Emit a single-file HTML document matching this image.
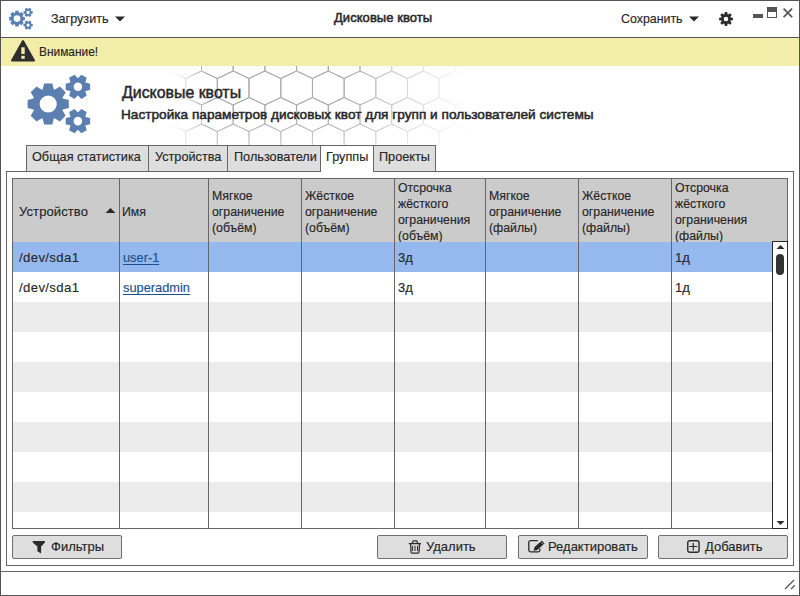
<!DOCTYPE html>
<html><head><meta charset="utf-8">
<style>
*{margin:0;padding:0;box-sizing:border-box}
html,body{width:800px;height:596px;overflow:hidden;background:#fff}
body{position:relative;font-family:"Liberation Sans",sans-serif;font-size:13px;color:#262626;-webkit-text-stroke-width:0.15px}
.a{position:absolute}
.t{position:absolute;white-space:nowrap;line-height:1}
.hl{position:absolute;background:#666;height:1px}
.vl{position:absolute;background:#666;width:1px}
.tab{position:absolute;top:145px;height:27px;background:#dedede;border:1px solid #666;border-right:none}
.tab span{position:absolute;top:5px;white-space:nowrap;line-height:1;font-size:12.7px}
.row{position:absolute;left:13px;width:759px;height:30px}
.cell{position:absolute;white-space:nowrap;line-height:1;top:10px}
.hd{position:absolute;line-height:16px;font-size:12.3px;white-space:nowrap}
.btn{position:absolute;top:535px;height:24px;background:#dedede;border:1px solid #6e6e6e;border-radius:2px}
.btn span{position:absolute;top:4px;white-space:nowrap;line-height:1}
</style></head><body>
<!-- window border -->
<div class="a" style="left:0;top:0;width:800px;height:596px;border:1px solid #555"></div>
<svg width="40" height="37" style="position:absolute;left:0;top:0"><path fill="#5a7fb0" fill-rule="evenodd" d="M22.51 16.50 L24.85 17.05 L24.85 20.15 L22.51 20.70 A5.90 5.90 0 0 1 22.38 21.01 L23.65 23.05 L21.45 25.25 L19.41 23.98 A5.90 5.90 0 0 1 19.10 24.11 L18.55 26.45 L15.45 26.45 L14.90 24.11 A5.90 5.90 0 0 1 14.59 23.98 L12.55 25.25 L10.35 23.05 L11.62 21.01 A5.90 5.90 0 0 1 11.49 20.70 L9.15 20.15 L9.15 17.05 L11.49 16.50 A5.90 5.90 0 0 1 11.62 16.19 L10.35 14.15 L12.55 11.95 L14.59 13.22 A5.90 5.90 0 0 1 14.90 13.09 L15.45 10.75 L18.55 10.75 L19.10 13.09 A5.90 5.90 0 0 1 19.41 13.22 L21.45 11.95 L23.65 14.15 L22.38 16.19 A5.90 5.90 0 0 1 22.51 16.50 Z M20.30 18.60 A3.30 3.30 0 1 0 13.70 18.60 A3.30 3.30 0 1 0 20.30 18.60 Z M31.04 10.90 L32.76 11.25 L32.76 13.55 L31.04 13.90 A3.30 3.30 0 0 1 30.87 14.20 L31.43 15.86 L29.43 17.01 L28.27 15.70 A3.30 3.30 0 0 1 27.93 15.70 L26.77 17.01 L24.77 15.86 L25.33 14.20 A3.30 3.30 0 0 1 25.16 13.90 L23.44 13.55 L23.44 11.25 L25.16 10.90 A3.30 3.30 0 0 1 25.33 10.60 L24.77 8.94 L26.77 7.79 L27.93 9.10 A3.30 3.30 0 0 1 28.27 9.10 L29.43 7.79 L31.43 8.94 L30.87 10.60 A3.30 3.30 0 0 1 31.04 10.90 Z M29.70 12.40 A1.60 1.60 0 1 0 26.50 12.40 A1.60 1.60 0 1 0 29.70 12.40 Z M31.04 23.60 L32.76 23.95 L32.76 26.25 L31.04 26.60 A3.30 3.30 0 0 1 30.87 26.90 L31.43 28.56 L29.43 29.71 L28.27 28.40 A3.30 3.30 0 0 1 27.93 28.40 L26.77 29.71 L24.77 28.56 L25.33 26.90 A3.30 3.30 0 0 1 25.16 26.60 L23.44 26.25 L23.44 23.95 L25.16 23.60 A3.30 3.30 0 0 1 25.33 23.30 L24.77 21.64 L26.77 20.49 L27.93 21.80 A3.30 3.30 0 0 1 28.27 21.80 L29.43 20.49 L31.43 21.64 L30.87 23.30 A3.30 3.30 0 0 1 31.04 23.60 Z M29.70 25.10 A1.60 1.60 0 1 0 26.50 25.10 A1.60 1.60 0 1 0 29.70 25.10 Z"/></svg>
<div class="t" style="left:51px;top:13px;font-size:12.6px">Загрузить</div>
<svg class="a" style="left:115px;top:16px" width="10" height="6"><path d="M0 0.5 L10 0.5 L5 5.5Z" fill="#2a2a2a"/></svg>
<div class="t" style="left:334px;top:11px;font-size:13px;letter-spacing:0.05px;-webkit-text-stroke-width:0.5px">Дисковые квоты</div>
<div class="t" style="left:621px;top:13px;font-size:12.4px">Сохранить</div>
<svg class="a" style="left:689px;top:16px" width="10" height="6"><path d="M0 0.5 L10 0.5 L5 5.5Z" fill="#2a2a2a"/></svg>
<svg width="14" height="14" style="position:absolute;left:719px;top:12px" viewBox="0 0 14 14"><path fill="#2b2b2b" fill-rule="evenodd" d="M11.63 5.40 L13.90 5.80 L13.90 8.20 L11.63 8.60 A4.90 4.90 0 0 1 11.41 9.14 L12.73 11.03 L11.03 12.73 L9.14 11.41 A4.90 4.90 0 0 1 8.60 11.63 L8.20 13.90 L5.80 13.90 L5.40 11.63 A4.90 4.90 0 0 1 4.86 11.41 L2.97 12.73 L1.27 11.03 L2.59 9.14 A4.90 4.90 0 0 1 2.37 8.60 L0.10 8.20 L0.10 5.80 L2.37 5.40 A4.90 4.90 0 0 1 2.59 4.86 L1.27 2.97 L2.97 1.27 L4.86 2.59 A4.90 4.90 0 0 1 5.40 2.37 L5.80 0.10 L8.20 0.10 L8.60 2.37 A4.90 4.90 0 0 1 9.14 2.59 L11.03 1.27 L12.73 2.97 L11.41 4.86 A4.90 4.90 0 0 1 11.63 5.40 Z M9.30 7.00 A2.30 2.30 0 1 0 4.70 7.00 A2.30 2.30 0 1 0 9.30 7.00 Z"/></svg>
<!-- window controls -->
<div class="a" style="left:753px;top:14px;width:10px;height:4px;background:#555"></div>
<div class="a" style="left:767px;top:7px;width:10px;height:11px;border:1px solid #555;border-top:5px solid #555"></div>
<svg class="a" style="left:782px;top:7px" width="12" height="12"><path d="M1.6 1.6 L10.1 10.1 M10.1 1.6 L1.6 10.1" stroke="#555" stroke-width="1.7"/></svg>
<div class="hl" style="left:1px;top:37px;width:798px;background:#555"></div>
<!-- warning -->
<div class="a" style="left:1px;top:38px;width:798px;height:28px;background:#f2eda8"></div>
<svg class="a" style="left:10px;top:39px" width="26" height="24"><path d="M13 2 L24 21.5 L2 21.5Z" fill="#2e2e2e" stroke="#2e2e2e" stroke-width="2" stroke-linejoin="round"/><rect x="11.3" y="8.3" width="3.4" height="6.7" fill="#f2eda8"/><rect x="11.3" y="16.8" width="3.4" height="3" fill="#f2eda8"/></svg>
<div class="t" style="left:39px;top:47px;font-size:11.9px">Внимание!</div>
<svg width="800" height="145" style="position:absolute;left:0;top:0">
<defs><linearGradient id="gx" gradientUnits="userSpaceOnUse" x1="172" x2="470" y1="0" y2="0">
<stop offset="0" stop-color="#fff" stop-opacity="0"/>
<stop offset="0.12" stop-color="#fff" stop-opacity="0.85"/>
<stop offset="0.55" stop-color="#fff" stop-opacity="0.85"/>
<stop offset="1" stop-color="#fff" stop-opacity="0"/></linearGradient>
<linearGradient id="gy" gradientUnits="userSpaceOnUse" x1="0" x2="0" y1="66" y2="146">
<stop offset="0.6" stop-color="#000" stop-opacity="0"/>
<stop offset="1" stop-color="#000" stop-opacity="0.5"/></linearGradient>
<mask id="m"><rect x="172" y="66" width="300" height="80" fill="url(#gx)"/><rect x="172" y="66" width="300" height="80" fill="url(#gy)"/></mask></defs>
<g mask="url(#m)"><path d="M138.1 18.0 L153.9 25.5 L153.9 44.5 L138.1 52.0 L122.2 44.5 L122.2 25.5Z M169.8 18.0 L185.7 25.5 L185.7 44.5 L169.8 52.0 L154.0 44.5 L154.0 25.5Z M201.5 18.0 L217.3 25.5 L217.3 44.5 L201.5 52.0 L185.7 44.5 L185.7 25.5Z M233.2 18.0 L249.0 25.5 L249.0 44.5 L233.2 52.0 L217.3 44.5 L217.3 25.5Z M264.9 18.0 L280.8 25.5 L280.8 44.5 L264.9 52.0 L249.0 44.5 L249.0 25.5Z M296.6 18.0 L312.5 25.5 L312.5 44.5 L296.6 52.0 L280.8 44.5 L280.8 25.5Z M328.3 18.0 L344.2 25.5 L344.2 44.5 L328.3 52.0 L312.4 44.5 L312.4 25.5Z M360.0 18.0 L375.9 25.5 L375.9 44.5 L360.0 52.0 L344.1 44.5 L344.1 25.5Z M391.7 18.0 L407.6 25.5 L407.6 44.5 L391.7 52.0 L375.8 44.5 L375.8 25.5Z M423.4 18.0 L439.2 25.5 L439.2 44.5 L423.4 52.0 L407.5 44.5 L407.5 25.5Z M455.1 18.0 L471.0 25.5 L471.0 44.5 L455.1 52.0 L439.2 44.5 L439.2 25.5Z M486.8 18.0 L502.7 25.5 L502.7 44.5 L486.8 52.0 L470.9 44.5 L470.9 25.5Z M518.5 18.0 L534.4 25.5 L534.4 44.5 L518.5 52.0 L502.6 44.5 L502.6 25.5Z M550.2 18.0 L566.1 25.5 L566.1 44.5 L550.2 52.0 L534.4 44.5 L534.4 25.5Z M153.9 44.5 L169.8 52.0 L169.8 71.0 L153.9 78.5 L138.1 71.0 L138.1 52.0Z M185.7 44.5 L201.5 52.0 L201.5 71.0 L185.7 78.5 L169.8 71.0 L169.8 52.0Z M217.3 44.5 L233.2 52.0 L233.2 71.0 L217.3 78.5 L201.5 71.0 L201.5 52.0Z M249.0 44.5 L264.9 52.0 L264.9 71.0 L249.0 78.5 L233.2 71.0 L233.2 52.0Z M280.8 44.5 L296.6 52.0 L296.6 71.0 L280.8 78.5 L264.9 71.0 L264.9 52.0Z M312.4 44.5 L328.3 52.0 L328.3 71.0 L312.4 78.5 L296.6 71.0 L296.6 52.0Z M344.1 44.5 L360.0 52.0 L360.0 71.0 L344.1 78.5 L328.3 71.0 L328.3 52.0Z M375.9 44.5 L391.7 52.0 L391.7 71.0 L375.9 78.5 L360.0 71.0 L360.0 52.0Z M407.5 44.5 L423.4 52.0 L423.4 71.0 L407.5 78.5 L391.7 71.0 L391.7 52.0Z M439.2 44.5 L455.1 52.0 L455.1 71.0 L439.2 78.5 L423.4 71.0 L423.4 52.0Z M470.9 44.5 L486.8 52.0 L486.8 71.0 L470.9 78.5 L455.1 71.0 L455.1 52.0Z M502.6 44.5 L518.5 52.0 L518.5 71.0 L502.6 78.5 L486.8 71.0 L486.8 52.0Z M534.4 44.5 L550.2 52.0 L550.2 71.0 L534.4 78.5 L518.5 71.0 L518.5 52.0Z M566.0 44.5 L581.9 52.0 L581.9 71.0 L566.0 78.5 L550.2 71.0 L550.2 52.0Z M138.1 71.0 L153.9 78.5 L153.9 97.5 L138.1 105.0 L122.2 97.5 L122.2 78.5Z M169.8 71.0 L185.7 78.5 L185.7 97.5 L169.8 105.0 L154.0 97.5 L154.0 78.5Z M201.5 71.0 L217.3 78.5 L217.3 97.5 L201.5 105.0 L185.7 97.5 L185.7 78.5Z M233.2 71.0 L249.0 78.5 L249.0 97.5 L233.2 105.0 L217.3 97.5 L217.3 78.5Z M264.9 71.0 L280.8 78.5 L280.8 97.5 L264.9 105.0 L249.0 97.5 L249.0 78.5Z M296.6 71.0 L312.5 78.5 L312.5 97.5 L296.6 105.0 L280.8 97.5 L280.8 78.5Z M328.3 71.0 L344.2 78.5 L344.2 97.5 L328.3 105.0 L312.4 97.5 L312.4 78.5Z M360.0 71.0 L375.9 78.5 L375.9 97.5 L360.0 105.0 L344.1 97.5 L344.1 78.5Z M391.7 71.0 L407.6 78.5 L407.6 97.5 L391.7 105.0 L375.8 97.5 L375.8 78.5Z M423.4 71.0 L439.2 78.5 L439.2 97.5 L423.4 105.0 L407.5 97.5 L407.5 78.5Z M455.1 71.0 L471.0 78.5 L471.0 97.5 L455.1 105.0 L439.2 97.5 L439.2 78.5Z M486.8 71.0 L502.7 78.5 L502.7 97.5 L486.8 105.0 L470.9 97.5 L470.9 78.5Z M518.5 71.0 L534.4 78.5 L534.4 97.5 L518.5 105.0 L502.6 97.5 L502.6 78.5Z M550.2 71.0 L566.1 78.5 L566.1 97.5 L550.2 105.0 L534.4 97.5 L534.4 78.5Z M153.9 97.5 L169.8 105.0 L169.8 124.0 L153.9 131.5 L138.1 124.0 L138.1 105.0Z M185.7 97.5 L201.5 105.0 L201.5 124.0 L185.7 131.5 L169.8 124.0 L169.8 105.0Z M217.3 97.5 L233.2 105.0 L233.2 124.0 L217.3 131.5 L201.5 124.0 L201.5 105.0Z M249.0 97.5 L264.9 105.0 L264.9 124.0 L249.0 131.5 L233.2 124.0 L233.2 105.0Z M280.8 97.5 L296.6 105.0 L296.6 124.0 L280.8 131.5 L264.9 124.0 L264.9 105.0Z M312.4 97.5 L328.3 105.0 L328.3 124.0 L312.4 131.5 L296.6 124.0 L296.6 105.0Z M344.1 97.5 L360.0 105.0 L360.0 124.0 L344.1 131.5 L328.3 124.0 L328.3 105.0Z M375.9 97.5 L391.7 105.0 L391.7 124.0 L375.9 131.5 L360.0 124.0 L360.0 105.0Z M407.5 97.5 L423.4 105.0 L423.4 124.0 L407.5 131.5 L391.7 124.0 L391.7 105.0Z M439.2 97.5 L455.1 105.0 L455.1 124.0 L439.2 131.5 L423.4 124.0 L423.4 105.0Z M470.9 97.5 L486.8 105.0 L486.8 124.0 L470.9 131.5 L455.1 124.0 L455.1 105.0Z M502.6 97.5 L518.5 105.0 L518.5 124.0 L502.6 131.5 L486.8 124.0 L486.8 105.0Z M534.4 97.5 L550.2 105.0 L550.2 124.0 L534.4 131.5 L518.5 124.0 L518.5 105.0Z M566.0 97.5 L581.9 105.0 L581.9 124.0 L566.0 131.5 L550.2 124.0 L550.2 105.0Z M138.1 124.0 L153.9 131.5 L153.9 150.5 L138.1 158.0 L122.2 150.5 L122.2 131.5Z M169.8 124.0 L185.7 131.5 L185.7 150.5 L169.8 158.0 L154.0 150.5 L154.0 131.5Z M201.5 124.0 L217.3 131.5 L217.3 150.5 L201.5 158.0 L185.7 150.5 L185.7 131.5Z M233.2 124.0 L249.0 131.5 L249.0 150.5 L233.2 158.0 L217.3 150.5 L217.3 131.5Z M264.9 124.0 L280.8 131.5 L280.8 150.5 L264.9 158.0 L249.0 150.5 L249.0 131.5Z M296.6 124.0 L312.5 131.5 L312.5 150.5 L296.6 158.0 L280.8 150.5 L280.8 131.5Z M328.3 124.0 L344.2 131.5 L344.2 150.5 L328.3 158.0 L312.4 150.5 L312.4 131.5Z M360.0 124.0 L375.9 131.5 L375.9 150.5 L360.0 158.0 L344.1 150.5 L344.1 131.5Z M391.7 124.0 L407.6 131.5 L407.6 150.5 L391.7 158.0 L375.8 150.5 L375.8 131.5Z M423.4 124.0 L439.2 131.5 L439.2 150.5 L423.4 158.0 L407.5 150.5 L407.5 131.5Z M455.1 124.0 L471.0 131.5 L471.0 150.5 L455.1 158.0 L439.2 150.5 L439.2 131.5Z M486.8 124.0 L502.7 131.5 L502.7 150.5 L486.8 158.0 L470.9 150.5 L470.9 131.5Z M518.5 124.0 L534.4 131.5 L534.4 150.5 L518.5 158.0 L502.6 150.5 L502.6 131.5Z M550.2 124.0 L566.1 131.5 L566.1 150.5 L550.2 158.0 L534.4 150.5 L534.4 131.5Z M153.9 150.5 L169.8 158.0 L169.8 177.0 L153.9 184.5 L138.1 177.0 L138.1 158.0Z M185.7 150.5 L201.5 158.0 L201.5 177.0 L185.7 184.5 L169.8 177.0 L169.8 158.0Z M217.3 150.5 L233.2 158.0 L233.2 177.0 L217.3 184.5 L201.5 177.0 L201.5 158.0Z M249.0 150.5 L264.9 158.0 L264.9 177.0 L249.0 184.5 L233.2 177.0 L233.2 158.0Z M280.8 150.5 L296.6 158.0 L296.6 177.0 L280.8 184.5 L264.9 177.0 L264.9 158.0Z M312.4 150.5 L328.3 158.0 L328.3 177.0 L312.4 184.5 L296.6 177.0 L296.6 158.0Z M344.1 150.5 L360.0 158.0 L360.0 177.0 L344.1 184.5 L328.3 177.0 L328.3 158.0Z M375.9 150.5 L391.7 158.0 L391.7 177.0 L375.9 184.5 L360.0 177.0 L360.0 158.0Z M407.5 150.5 L423.4 158.0 L423.4 177.0 L407.5 184.5 L391.7 177.0 L391.7 158.0Z M439.2 150.5 L455.1 158.0 L455.1 177.0 L439.2 184.5 L423.4 177.0 L423.4 158.0Z M470.9 150.5 L486.8 158.0 L486.8 177.0 L470.9 184.5 L455.1 177.0 L455.1 158.0Z M502.6 150.5 L518.5 158.0 L518.5 177.0 L502.6 184.5 L486.8 177.0 L486.8 158.0Z M534.4 150.5 L550.2 158.0 L550.2 177.0 L534.4 184.5 L518.5 177.0 L518.5 158.0Z M566.0 150.5 L581.9 158.0 L581.9 177.0 L566.0 184.5 L550.2 177.0 L550.2 158.0Z" fill="none" stroke="#9a9a9a" stroke-width="1"/></g></svg>
<svg width="800" height="150" style="position:absolute;left:0;top:0" viewBox="0 0 800 150"><path fill="#5a7fb0" fill-rule="evenodd" d="M62.76 98.40 L68.80 99.90 L68.80 108.10 L62.76 109.60 A15.60 15.60 0 0 1 62.46 110.34 L65.66 115.66 L59.86 121.46 L54.54 118.26 A15.60 15.60 0 0 1 53.80 118.56 L52.30 124.60 L44.10 124.60 L42.60 118.56 A15.60 15.60 0 0 1 41.86 118.26 L36.54 121.46 L30.74 115.66 L33.94 110.34 A15.60 15.60 0 0 1 33.64 109.60 L27.60 108.10 L27.60 99.90 L33.64 98.40 A15.60 15.60 0 0 1 33.94 97.66 L30.74 92.34 L36.54 86.54 L41.86 89.74 A15.60 15.60 0 0 1 42.60 89.44 L44.10 83.40 L52.30 83.40 L53.80 89.44 A15.60 15.60 0 0 1 54.54 89.74 L59.86 86.54 L65.66 92.34 L62.46 97.66 A15.60 15.60 0 0 1 62.76 98.40 Z M56.80 104.00 A8.60 8.60 0 1 0 39.60 104.00 A8.60 8.60 0 1 0 56.80 104.00 Z M85.63 82.60 L90.11 83.70 L90.11 89.90 L85.63 91.00 A8.80 8.80 0 0 1 85.40 91.40 L86.69 95.83 L81.32 98.93 L78.13 95.60 A8.80 8.80 0 0 1 77.67 95.60 L74.48 98.93 L69.11 95.83 L70.40 91.40 A8.80 8.80 0 0 1 70.17 91.00 L65.69 89.90 L65.69 83.70 L70.17 82.60 A8.80 8.80 0 0 1 70.40 82.20 L69.11 77.77 L74.48 74.67 L77.67 78.00 A8.80 8.80 0 0 1 78.13 78.00 L81.32 74.67 L86.69 77.77 L85.40 82.20 A8.80 8.80 0 0 1 85.63 82.60 Z M82.20 86.80 A4.30 4.30 0 1 0 73.60 86.80 A4.30 4.30 0 1 0 82.20 86.80 Z M85.63 116.90 L90.11 118.00 L90.11 124.20 L85.63 125.30 A8.80 8.80 0 0 1 85.40 125.70 L86.69 130.13 L81.32 133.23 L78.13 129.90 A8.80 8.80 0 0 1 77.67 129.90 L74.48 133.23 L69.11 130.13 L70.40 125.70 A8.80 8.80 0 0 1 70.17 125.30 L65.69 124.20 L65.69 118.00 L70.17 116.90 A8.80 8.80 0 0 1 70.40 116.50 L69.11 112.07 L74.48 108.97 L77.67 112.30 A8.80 8.80 0 0 1 78.13 112.30 L81.32 108.97 L86.69 112.07 L85.40 116.50 A8.80 8.80 0 0 1 85.63 116.90 Z M82.20 121.10 A4.30 4.30 0 1 0 73.60 121.10 A4.30 4.30 0 1 0 82.20 121.10 Z"/></svg>
<div class="t" style="left:122px;top:85px;font-size:15.9px;-webkit-text-stroke-width:0.45px">Дисковые квоты</div>
<div class="t" style="left:121px;top:108px;font-size:13.65px;-webkit-text-stroke-width:0.5px">Настройка параметров дисковых квот для групп и пользователей системы</div>
<!-- panel -->
<div class="a" style="left:6px;top:171px;width:788px;height:395px;border:1px solid #666"></div>
<!-- tabs -->
<div class="tab" style="left:26px;width:123px"><span style="left:5px">Общая статистика</span></div>
<div class="tab" style="left:148px;width:80px"><span style="left:6px">Устройства</span></div>
<div class="tab" style="left:227px;width:94px"><span style="left:6px">Пользователи</span></div>
<div class="tab" style="left:320px;width:54px;background:#fff;border-bottom:none;height:27px"><span style="left:5px">Группы</span></div>
<div class="tab" style="left:373px;width:63px;border-right:1px solid #666"><span style="left:5px">Проекты</span></div>
<!-- table -->
<div class="a" style="left:12px;top:178px;width:776px;height:351px;border:1px solid #666;background:#fff"></div>
<div class="a" style="left:13px;top:179px;width:774px;height:63px;background:#cbcbcb"></div>
<div class="hd" style="left:19px;top:203.5px;font-size:13px;letter-spacing:0.1px">Устройство</div>
<div class="hd" style="left:122px;top:203.5px">Имя</div>
<div class="hd" style="left:212px;top:187.5px">Мягкое<br>ограничение<br>(объём)</div>
<div class="hd" style="left:305px;top:187.5px">Жёсткое<br>ограничение<br>(объём)</div>
<div class="hd" style="left:398px;top:179.5px">Отсрочка<br>жёсткого<br>ограничения<br>(объём)</div>
<div class="hd" style="left:489px;top:187.5px">Мягкое<br>ограничение<br>(файлы)</div>
<div class="hd" style="left:582px;top:187.5px">Жёсткое<br>ограничение<br>(файлы)</div>
<div class="hd" style="left:675px;top:179.5px">Отсрочка<br>жёсткого<br>ограничения<br>(файлы)</div>
<svg class="a" style="left:105px;top:207px" width="11" height="7"><path d="M0.5 6 L10.5 6 L5.5 1Z" fill="#2a2a2a"/></svg>
<div class="a" style="left:13px;top:242px;width:759px;height:30px;background:#95b9ee"></div>
<div class="a" style="left:13px;top:272px;width:759px;height:30px;background:#fff"></div>
<div class="a" style="left:13px;top:302px;width:759px;height:30px;background:#ececec"></div>
<div class="a" style="left:13px;top:332px;width:759px;height:30px;background:#fff"></div>
<div class="a" style="left:13px;top:362px;width:759px;height:30px;background:#ececec"></div>
<div class="a" style="left:13px;top:392px;width:759px;height:30px;background:#fff"></div>
<div class="a" style="left:13px;top:422px;width:759px;height:30px;background:#ececec"></div>
<div class="a" style="left:13px;top:452px;width:759px;height:30px;background:#fff"></div>
<div class="a" style="left:13px;top:482px;width:759px;height:30px;background:#ececec"></div>
<div class="a" style="left:13px;top:512px;width:759px;height:16px;background:#fff"></div>
<div class="vl" style="left:119px;top:179px;height:349px"></div>
<div class="vl" style="left:208px;top:179px;height:349px"></div>
<div class="vl" style="left:301px;top:179px;height:349px"></div>
<div class="vl" style="left:394px;top:179px;height:349px"></div>
<div class="vl" style="left:485px;top:179px;height:349px"></div>
<div class="vl" style="left:578px;top:179px;height:349px"></div>
<div class="vl" style="left:671px;top:179px;height:349px"></div>
<div class="hl" style="left:13px;top:242px;width:774px;background:transparent"></div>
<div class="t" style="left:19px;top:251px;font-size:13.2px;letter-spacing:0.35px;-webkit-text-stroke-width:0.1px">/dev/sda1</div>
<div class="t" style="left:123px;top:252px;font-size:12.8px;color:#1c4f8f;text-decoration:underline;text-underline-offset:2px;text-decoration-skip-ink:none">user-1</div>
<div class="t" style="left:398px;top:251px;font-size:13px">3д</div>
<div class="t" style="left:675px;top:251px;font-size:13px">1д</div>
<div class="t" style="left:19px;top:281px;font-size:13.2px;letter-spacing:0.35px;-webkit-text-stroke-width:0.1px">/dev/sda1</div>
<div class="t" style="left:123px;top:282px;font-size:12.8px;color:#1c4f8f;text-decoration:underline;text-underline-offset:2px;text-decoration-skip-ink:none">superadmin</div>
<div class="t" style="left:398px;top:281px;font-size:13px">3д</div>
<div class="t" style="left:675px;top:281px;font-size:13px">1д</div>
<!-- scrollbar -->
<div class="a" style="left:772px;top:241px;width:16px;height:288px;background:#fff;border:1px solid #2a2a2a"></div>
<svg class="a" style="left:775.5px;top:244px" width="9" height="6"><path d="M0.5 5 L8.5 5 L4.5 1Z" fill="#2a2a2a"/></svg>
<div class="a" style="left:776px;top:254px;width:8px;height:21px;background:#333;border-radius:4px"></div>
<svg class="a" style="left:775.5px;top:520px" width="9" height="6"><path d="M0.5 1 L8.5 1 L4.5 5Z" fill="#2a2a2a"/></svg>
<!-- buttons -->
<div class="btn" style="left:12px;width:110px"><svg class="a" style="left:19px;top:5px" width="14" height="13"><path d="M0.7 0 H12.9 V1.4 L9.1 5.6 V12.6 L5.4 10.2 V5.6 L0.7 1.4Z" fill="#2a2a2a"/></svg><span style="left:38px">Фильтры</span></div>
<div class="btn" style="left:377px;width:130px"><svg class="a" style="left:30px;top:3px" width="14" height="16"><g fill="none" stroke="#2a2a2a" stroke-width="1.25"><path d="M4.6 4.3 V3.2 A1.4 1.4 0 0 1 6 1.8 H8 A1.4 1.4 0 0 1 9.4 3.2 V4.3"/><path d="M0.8 4.6 H13"/><path d="M2.6 4.6 L3 13 A1.2 1.2 0 0 0 4.2 14.2 H9.8 A1.2 1.2 0 0 0 11 13 L11.6 4.6"/><path d="M4.6 6.8 V12 M7 6.8 V12 M9.5 6.8 V12" stroke-width="1"/></g></svg><span style="left:48px">Удалить</span></div>
<div class="btn" style="left:518px;width:130px"><svg class="a" style="left:8px;top:3px" width="19" height="15"><path d="M10.8 1.6 H3.6 A1.8 1.8 0 0 0 1.8 3.4 V11.1 A1.8 1.8 0 0 0 3.6 12.9 H11.1 A1.8 1.8 0 0 0 12.9 11.1 V9.6" fill="none" stroke="#2a2a2a" stroke-width="1.3"/><path d="M14.86 1.51 L17.54 4.49 L10.32 10.99 L6.5 11.8 L7.64 8.01Z" fill="#2a2a2a"/><path d="M13.9 2.6 L16.5 5.5" stroke="#dedede" stroke-width="0.6"/></svg><span style="left:29px">Редактировать</span></div>
<div class="btn" style="left:658px;width:130px"><svg class="a" style="left:28px;top:4px" width="14" height="14"><rect x="0.75" y="0.75" width="11.3" height="11.5" rx="2" fill="none" stroke="#2a2a2a" stroke-width="1.4"/><path d="M6.3 2.9 V10.4 M2.3 6.5 H10.3" stroke="#2a2a2a" stroke-width="1.2"/></svg><span style="left:46px">Добавить</span></div>
<!-- status bar -->
<div class="hl" style="left:1px;top:571px;width:798px"></div>
<svg class="a" style="left:784px;top:579px" width="12" height="11"><path d="M1 10 L10 1 M7 10 L10.8 6.2" stroke="#555" stroke-width="1.3"/></svg>
</body></html>
